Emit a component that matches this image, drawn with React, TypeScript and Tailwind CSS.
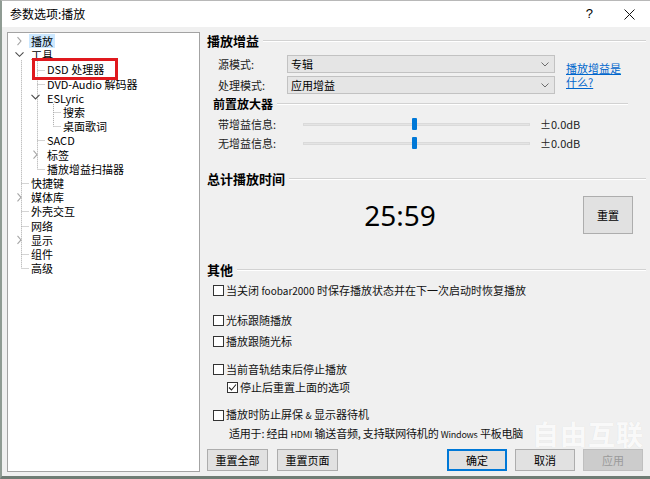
import React from "react";

const FONT = '"Noto Sans CJK SC", "Noto Sans", sans-serif';

function Header({ text, size = 13, pl = 0, mr = 0, mt = 0 }: { text: string; size?: number; pl?: number; mr?: number; mt?: number }) {
  return (
    <div className="flex items-center h-[16px]" style={{ paddingLeft: pl, marginRight: mr, marginTop: mt }}>
      <span className="font-bold leading-[16px] text-black whitespace-nowrap" style={{ fontSize: size }}>{text}</span>
      <div className="flex-1 ml-[4px] h-[2px] border-t border-t-[#d2d2d2] border-b border-b-white" />
    </div>
  );
}

function Select({ value }: { value: string }) {
  return (
    <div className="w-[268px] h-[18px] bg-[#e5e5e5] border border-[#c2c2c2] flex items-center pl-[3px] pr-[5px]">
      <span className="flex-1 text-[11px] leading-[16px] text-black">{value}</span>
      <svg width="8" height="5" viewBox="0 0 8 5"><path d="M0.5 0.5 L4 4 L7.5 0.5" fill="none" stroke="#6b6b6b" strokeWidth="1" /></svg>
    </div>
  );
}

function Slider({ label }: { label: string }) {
  return (
    <div className="flex items-center h-[16px]">
      <div className="w-[96px] pl-[11px] text-[11px] leading-[16px] text-[#222]">{label}</div>
      <div className="relative w-[227px] h-[16px] flex items-center">
        <div className="w-full h-[3px] bg-[#e4e4e4] border border-[#dadada]" />
        <div className="absolute left-[109px] top-[2px] w-[5px] h-[12px] bg-[#0078d7] rounded-[1px]" />
      </div>
      <div className="ml-[10px] text-[11px] leading-[16px] text-[#222]">±0.0dB</div>
    </div>
  );
}

function Check({ label, checked = false, pl = 6, mt = 0 }: { label: React.ReactNode; checked?: boolean; pl?: number; mt?: number }) {
  return (
    <div className="flex items-center h-[16px]" style={{ paddingLeft: pl, marginTop: mt }}>
      <div className="w-[11px] h-[11px] border border-[#333] bg-white flex items-center justify-center">
        {checked && (
          <svg width="9" height="9" viewBox="0 0 9 9"><path d="M1 4.5 L3.5 7 L8 1.5" fill="none" stroke="#222" strokeWidth="1.1" /></svg>
        )}
      </div>
      <span className="ml-[2px] text-[11px] leading-[16px] text-[#111] whitespace-nowrap">{label}</span>
    </div>
  );
}

function Btn({ text, w = 61, variant = "normal" }: { text: string; w?: number; variant?: "normal" | "default" | "disabled" }) {
  const cls =
    variant === "default"
      ? "bg-[#e1e1e1] border border-[#0078d7] shadow-[inset_0_0_0_1px_#0078d7] text-black"
      : variant === "disabled"
      ? "bg-[#cccccc] border border-[#bfbfbf] text-[#9a9a9a]"
      : "bg-[#e1e1e1] border border-[#adadad] text-black";
  return (
    <div className={`h-[22px] flex items-center justify-center text-[11px] leading-[16px] ${cls}`} style={{ width: w }}>
      {text}
    </div>
  );
}

const ROW = 14.2;
type Item = { t: string; lvl: number; hl?: boolean };
const items: Item[] = [
  { t: "播放", lvl: 0, hl: true },
  { t: "工具", lvl: 0 },
  { t: "DSD 处理器", lvl: 1 },
  { t: "DVD-Audio 解码器", lvl: 1 },
  { t: "ESLyric", lvl: 1 },
  { t: "搜索", lvl: 2 },
  { t: "桌面歌词", lvl: 2 },
  { t: "SACD", lvl: 1 },
  { t: "标签", lvl: 1 },
  { t: "播放增益扫描器", lvl: 1 },
  { t: "快捷键", lvl: 0 },
  { t: "媒体库", lvl: 0 },
  { t: "外壳交互", lvl: 0 },
  { t: "网络", lvl: 0 },
  { t: "显示", lvl: 0 },
  { t: "组件", lvl: 0 },
  { t: "高级", lvl: 0 },
];

function TreeLines() {
  const cy = (i: number) => 1 + ROW * i + ROW / 2;
  const d = "#a8a8a8";
  const dash = "1 1";
  const closed = (x: number, y: number) => (
    <path d={`M${x - 1.5} ${y - 4} L${x + 2} ${y} L${x - 1.5} ${y + 4}`} fill="none" stroke="#a6a6a6" strokeWidth="1.1" />
  );
  const open = (x: number, y: number) => (
    <path d={`M${x - 4} ${y - 2} L${x} ${y + 2} L${x + 4} ${y - 2}`} fill="none" stroke="#4a4a4a" strokeWidth="1.1" />
  );
  const lx0 = 13.5, lx1 = 29.5, lx2 = 45.5;
  return (
    <svg className="absolute left-0 top-0 pointer-events-none" width="191" height="300">
      <line x1={lx0} y1={cy(1) + 5} x2={lx0} y2={cy(16)} stroke={d} strokeDasharray={dash} />
      {[10, 12, 13, 15, 16].map((i) => (
        <line key={i} x1={lx0} y1={Math.round(cy(i)) + 0.5} x2={lx0 + 7} y2={Math.round(cy(i)) + 0.5} stroke={d} strokeDasharray={dash} />
      ))}
      <line x1={lx1} y1={cy(1) + 6} x2={lx1} y2={cy(9)} stroke={d} strokeDasharray={dash} />
      {[2, 3, 7, 9].map((i) => (
        <line key={i} x1={lx1} y1={Math.round(cy(i)) + 0.5} x2={lx1 + 8} y2={Math.round(cy(i)) + 0.5} stroke={d} strokeDasharray={dash} />
      ))}
      <line x1={lx2} y1={cy(4) + 6} x2={lx2} y2={cy(6)} stroke={d} strokeDasharray={dash} />
      {[5, 6].map((i) => (
        <line key={i} x1={lx2} y1={Math.round(cy(i)) + 0.5} x2={lx2 + 8} y2={Math.round(cy(i)) + 0.5} stroke={d} strokeDasharray={dash} />
      ))}
      {closed(11, cy(0))}
      {open(11.5, cy(1) - 1)}
      {open(27.5, cy(4) - 1)}
      {closed(27, cy(8))}
      {closed(11, cy(11))}
      {closed(11, cy(14))}
    </svg>
  );
}

function Tree() {
  return (
    <div className="relative w-[193px] h-[440px] bg-white border border-[#a3a3a3] mt-[5px] ml-[5px] shrink-0">
      <TreeLines />
      <div className="pt-[1px] relative">
        {items.map((it, i) => (
          <div key={i} className="flex items-center" style={{ height: ROW, paddingLeft: 21 + it.lvl * 16 }}>
            <span className={`px-[2px] text-[11px] leading-[14px] whitespace-nowrap text-black ${it.hl ? "bg-[#cce8ff]" : ""}`}>{it.t}</span>
          </div>
        ))}
      </div>
      <div className="absolute left-[24px] top-[25px] w-[86px] h-[22px] border-[3px] border-[#e0191e]" />
    </div>
  );
}

export default function App() {
  return (
    <div
      className="relative w-[650px] h-[479px] overflow-hidden flex flex-col bg-[#f0f0f0] border-l-2 border-l-[#8f9b93] border-t border-t-[#b8b8b8] border-b-[3px] border-b-[#6f7c74]"
      style={{ fontFamily: FONT }}
    >
      <div className="h-[26px] bg-white flex items-center shrink-0">
        <span className="ml-[8px] text-[12px] leading-[16px] text-black">参数选项:播放</span>
        <div className="flex-1" />
        <span className="text-[13px] leading-[16px] text-black mr-[31px]" style={{ fontFamily: '"Liberation Sans", sans-serif' }}>?</span>
        <svg width="11" height="11" viewBox="0 0 11 11" className="mr-[15px]">
          <path d="M0.5 0.5 L10.5 10.5 M10.5 0.5 L0.5 10.5" stroke="#111" strokeWidth="1" />
        </svg>
      </div>

      <div className="flex flex-1">
        <Tree />
        <div className="ml-[7px] w-[439px] flex flex-col">
          <Header text="播放增益" mt={6} />
          <div className="flex mt-[6px]">
            <div className="flex flex-col gap-[3px]">
              <div className="flex items-center h-[18px]">
                <div className="w-[80px] pl-[11px] text-[11px] leading-[16px] text-[#222]">源模式:</div>
                <Select value="专辑" />
              </div>
              <div className="flex items-center h-[18px]">
                <div className="w-[80px] pl-[11px] text-[11px] leading-[16px] text-[#222]">处理模式:</div>
                <Select value="应用增益" />
              </div>
            </div>
            <div className="ml-[11px] pt-[6px] flex flex-col text-[11px] leading-[14px] text-[#0066cc] underline">
              <span>播放增益是</span>
              <span>什么?</span>
            </div>
          </div>

          <Header text="前置放大器" size={12} pl={6} mr={18} mt={2} />
          <div className="mt-[4px]">
            <Slider label="带增益信息:" />
          </div>
          <div className="mt-[3px]">
            <Slider label="无增益信息:" />
          </div>

          <Header text="总计播放时间" mt={20} />
          <div className="flex items-center h-[38px] mt-[9px]">
            <div className="w-[376px] pl-[10px] text-center text-[28px] leading-[36px] text-black" style={{ fontFamily: '"Noto Sans", sans-serif' }}>
              25:59
            </div>
            <div className="w-[50px] h-[38px] bg-[#e1e1e1] border border-[#adadad] flex items-center justify-center text-[11px] text-black">
              重置
            </div>
          </div>

          <Header text="其他" mt={28} />
          <Check mt={4} label={<>当关闭 <span className="text-[10px]">foobar2000</span> 时保存播放状态并在下一次启动时恢复播放</>} />
          <Check mt={14} label="光标跟随播放" />
          <Check mt={5} label="播放跟随光标" />
          <Check mt={12} label="当前音轨结束后停止播放" />
          <Check mt={2} pl={20} checked label="停止后重置上面的选项" />
          <Check mt={12} label={<>播放时防止屏保 <span className="text-[9px]">&amp;</span> 显示器待机</>} />
          <div className="mt-[2px] pl-[22px] h-[16px] text-[11px] leading-[16px] text-[#111] whitespace-nowrap tracking-[-0.2px]">
            适用于: 经由 <span className="text-[9px]">HDMI</span> 输送音频, 支持联网待机的 <span className="text-[9px]">Windows</span> 平板电脑
          </div>

          <div className="flex justify-between mt-[8px] pr-[3px]">
            <div className="flex gap-[9px]">
              <Btn text="重置全部" />
              <Btn text="重置页面" />
            </div>
            <div className="flex gap-[8px]">
              <Btn text="确定" w={60} variant="default" />
              <Btn text="取消" w={60} />
              <Btn text="应用" w={60} variant="disabled" />
            </div>
          </div>
        </div>
      </div>

      <div
        className="absolute left-[530px] top-[419px] text-[27px] leading-[28px] font-bold whitespace-nowrap text-white/85 pointer-events-none tracking-[1px]"
        style={{ textShadow: "0 0 1px rgba(0,0,0,0.10)" }}
      >
        自由互联
      </div>
    </div>
  );
}
